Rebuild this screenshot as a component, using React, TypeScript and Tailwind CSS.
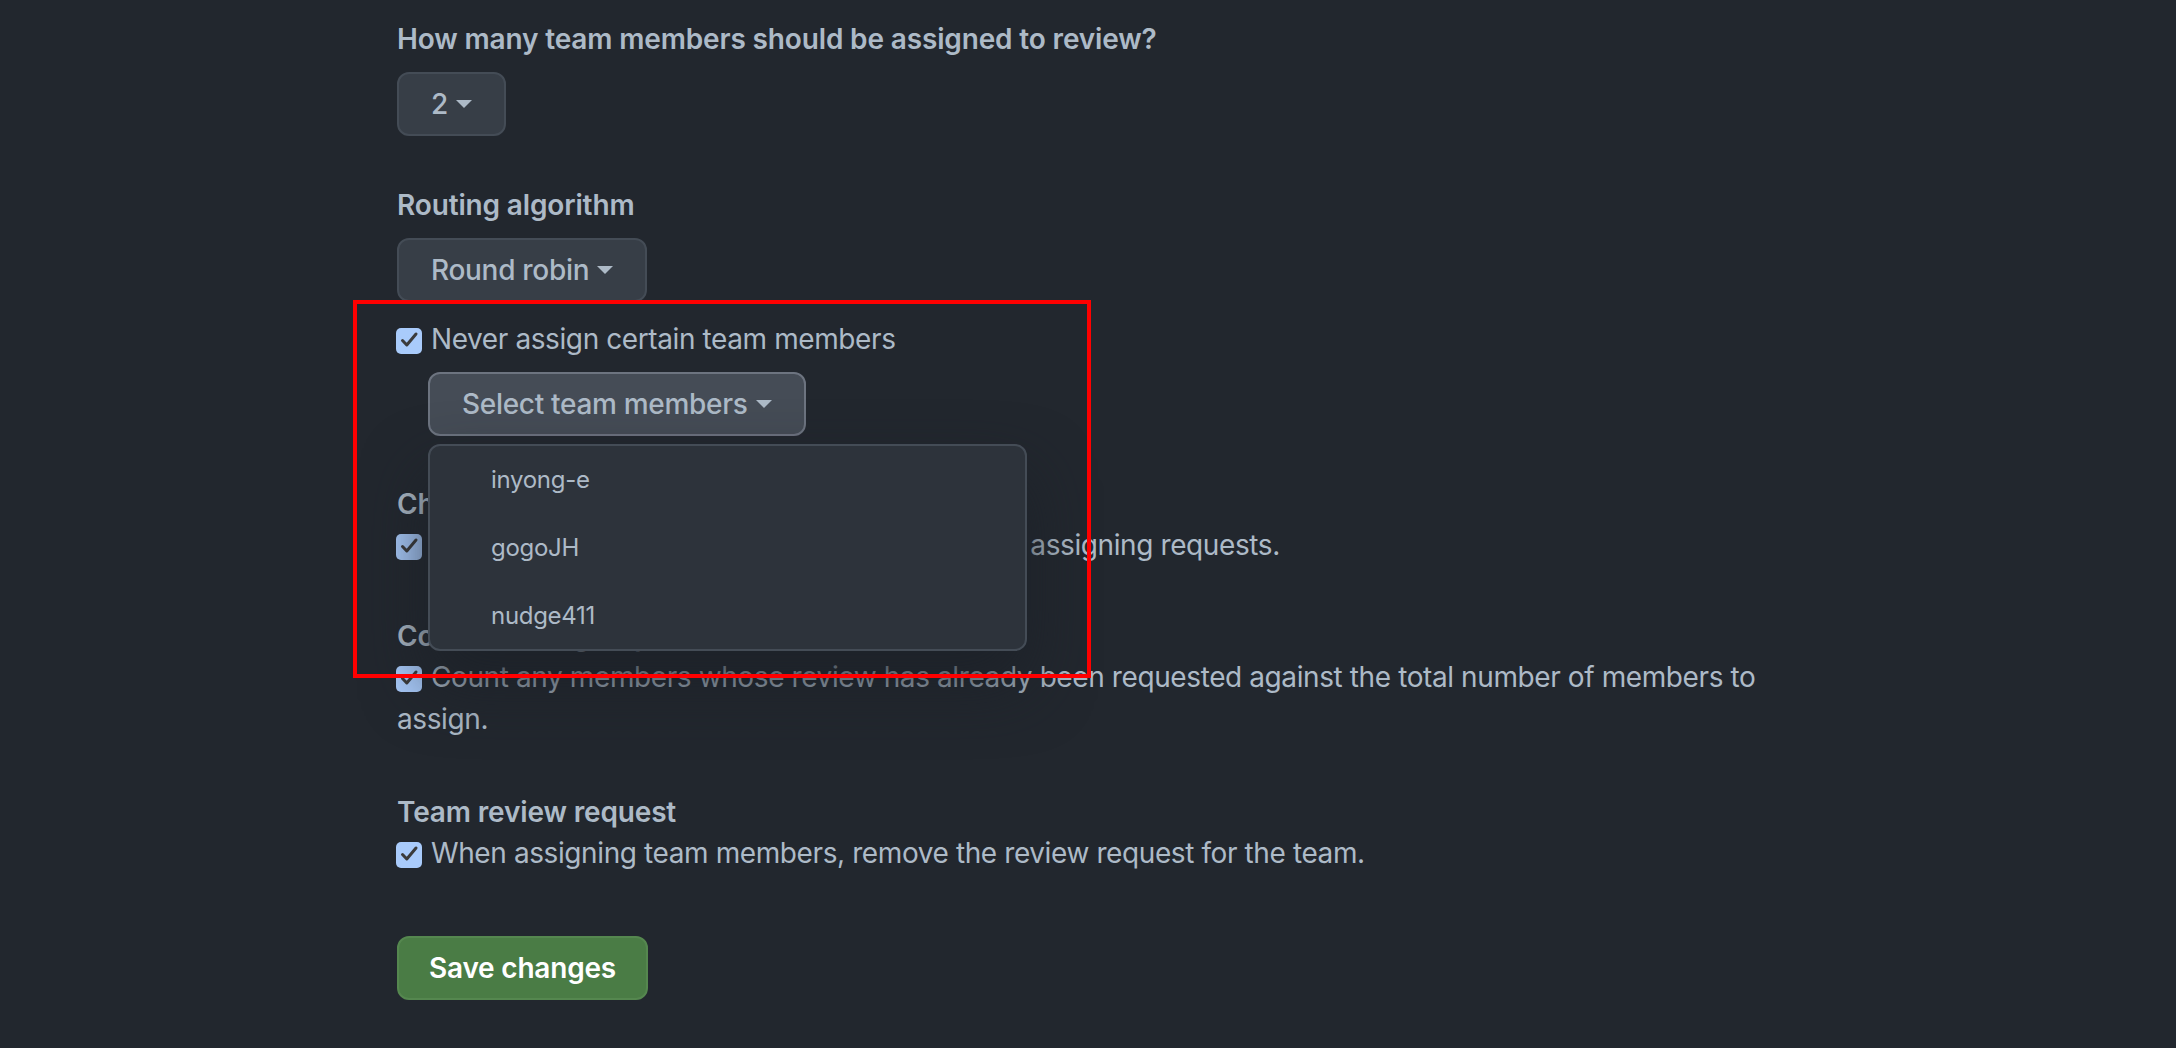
import React from 'react';

function Caret() {
  return <span className="inline-block w-0 h-0 ml-2 border-x-8 border-t-8 border-x-transparent border-t-[#adbac7] align-middle" />;
}

function CheckBox() {
  return (
    <span className="inline-flex items-center justify-center w-[26px] h-[26px] -ml-px mr-[9px] rounded-[5px] bg-[#a9cbfb] align-[-5px]">
      <svg width="26" height="26" viewBox="0 0 26 26">
        <path d="M6.5 12.5 L10.8 17 L20 6" fill="none" stroke="#3b3b3b" strokeWidth="3" strokeLinecap="round" strokeLinejoin="round" />
      </svg>
    </span>
  );
}

function MenuButton({ label, open = false }: { label: string; open?: boolean }) {
  return (
    <button
      className={`h-16 px-8 rounded-xl border-2 text-[28px] font-medium tracking-[-0.3px] text-[#adbac7] flex items-center ${
        open ? 'bg-[#454c56] border-[#6d7480]' : 'bg-[#373e47] border-[#444c56]'
      }`}
    >
      {label}
      <Caret />
    </button>
  );
}

const members = ['inyong-e', 'gogoJH', 'nudge411'];

export default function App() {
  return (
    <div
      className="min-h-screen bg-[#22272e] text-[#adbac7] text-[28px] leading-[42px] tracking-[-0.4px]"
      style={{ fontFamily: 'Inter, "Noto Sans", sans-serif' }}
    >
      <div className="relative h-[1048px] overflow-hidden">
        <div className="pl-[397px] pt-[18px] w-[1790px]">
          {/* Reviewer count */}
          <h3 className="font-semibold tracking-[-0.15px]">How many team members should be assigned to review?</h3>
          <div className="mt-3">
            <MenuButton label="2" />
          </div>

          {/* Routing */}
          <h3 className="mt-12 font-semibold tracking-[-0.15px]">Routing algorithm</h3>
          <div className="mt-3">
            <MenuButton label="Round robin" />
          </div>

          <label className="block mt-4">
            <CheckBox />
            Never assign certain team members
          </label>
          <div className="mt-3 ml-[31px]">
            <MenuButton label="Select team members" open />
          </div>

          <h3 className="mt-12 font-semibold leading-[40px] tracking-[-0.15px]">Child team members</h3>
          <label className="block">
            <CheckBox />
            Include the members of any child teams when assigning requests.
          </label>

          <h3 className="mt-[50px] font-semibold leading-[40px] tracking-[-0.15px]">Count existing requests</h3>
          <label className="block">
            <CheckBox />
            Count any members whose review has already been requested against the total number of members to assign.
          </label>

          <h3 className="mt-[52px] font-semibold leading-[40px] tracking-[-0.15px]">Team review request</h3>
          <label className="block">
            <CheckBox />
            When assigning team members, remove the review request for the team.
          </label>

          <button className="mt-[62px] h-16 w-[251px] rounded-xl border-2 border-[#55874f] bg-[#4a7c45] text-white font-semibold text-[28px] tracking-[-0.2px]">
            Save changes
          </button>
        </div>

        {/* Open member menu */}
        <div className="absolute left-[428px] top-[444px] w-[599px] h-[207px] rounded-xl border-2 border-[#444c56] bg-[#2d333b] shadow-[0_32px_64px_rgba(28,33,40,0.85)] overflow-hidden">
          {members.map((m) => (
            <div key={m} className="h-[68px] flex items-center pl-[61px] text-[24px] leading-9 tracking-[-0.3px] text-[#adbac7]">
              {m}
            </div>
          ))}
        </div>

        {/* Annotation box */}
        <div className="absolute left-[353px] top-[300px] w-[738px] h-[378px] border-4 border-[#ff0000] pointer-events-none" />
      </div>
    </div>
  );
}
